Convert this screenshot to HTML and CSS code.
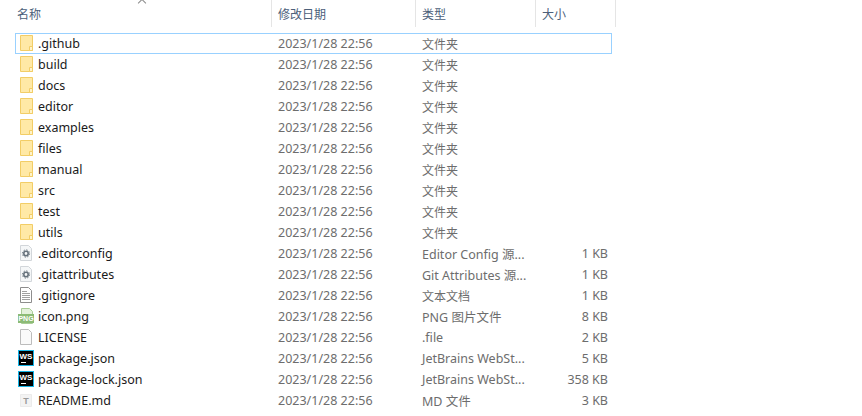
FILE: index.html
```html
<!DOCTYPE html>
<html lang="zh-CN">
  <head>
    <meta charset="UTF-8" />
    <title>three.js</title>
    <link rel="stylesheet" href="styles.css">
  </head>
  <body>
    <svg class="sprites" xmlns="http://www.w3.org/2000/svg">
      <symbol id="folder" viewBox="0 0 16 16">
        <path fill="#ffe9a6" stroke="#f2cd66" d="M2.5 .5H14.5V15.5H2.5Z"></path>
        <path fill="#fff3c9" stroke="#f2cd66" d="M11.5 15.5V11.5H14.5V15.5Z"></path>
      </symbol>
      <symbol id="config" viewBox="0 0 16 16">
        <path fill="#f5f7f8" stroke="#d2d6da" d="M2.5 .5H10.5L13.5 3.5V15.5H2.5Z"></path>
        <circle cx="8" cy="8.5" r="2.2" fill="none" stroke="#66727c" stroke-width="1.6"></circle>
        <circle cx="8" cy="8.5" r="3.6" fill="none" stroke="#66727c" stroke-width="1" stroke-dasharray="1.4 1.4"></circle>
      </symbol>
      <symbol id="text" viewBox="0 0 16 16">
        <path fill="#fff" stroke="#8d8d8d" d="M2.5 .5H10.5L13.5 3.5V15.5H2.5Z"></path>
        <path fill="none" stroke="#a0a0a0" d="M4 4.5H9M4 6.5H12M4 8.5H12M4 10.5H12M4 12.5H12"></path>
      </symbol>
      <symbol id="png" viewBox="0 0 16 16">
        <path fill="#e4f1dc" stroke="#a9cc96" d="M3.5 .5H11.5L14.5 3.5V15.5H3.5Z"></path>
        <rect x="0" y="6" width="16" height="9" fill="#8cbb76"></rect>
        <text x="8" y="13.4" class="png-mark" text-anchor="middle">PNG</text>
      </symbol>
      <symbol id="blank" viewBox="0 0 16 16">
        <path fill="#fafafa" stroke="#bcbcbc" d="M2.5 .5H10.5L13.5 3.5V15.5H2.5Z"></path>
      </symbol>
      <symbol id="webstorm" viewBox="0 0 16 16">
        <rect x=".5" y=".5" width="15" height="15" fill="#000" stroke="#14b4e6"></rect>
        <text x="8" y="9" class="ws-mark" text-anchor="middle">WS</text>
        <path stroke="#fff" d="M3 12.5H8"></path>
      </symbol>
      <symbol id="markdown" viewBox="0 0 16 16">
        <path fill="#f3f3f3" stroke="#ebebeb" d="M2.5 2.5H13.5V14.5H2.5Z"></path>
        <text x="8" y="12" class="md-mark" text-anchor="middle">T</text>
      </symbol>
    </svg>

    <div class="explorer">
      <div class="columns">
        <div class="col col-name">名称<span class="sort-arrow"></span></div>
        <div class="col">修改日期</div>
        <div class="col">类型</div>
        <div class="col">大小</div>
      </div>

      <div class="row selected">
        <span class="name"><svg class="icon"><use href="#folder"></use></svg>.github</span>
        <span>2023/1/28 22:56</span><span class="cjk">文件夹</span><span class="size"></span>
      </div>
      <div class="row">
        <span class="name"><svg class="icon"><use href="#folder"></use></svg>build</span>
        <span>2023/1/28 22:56</span><span class="cjk">文件夹</span><span class="size"></span>
      </div>
      <div class="row">
        <span class="name"><svg class="icon"><use href="#folder"></use></svg>docs</span>
        <span>2023/1/28 22:56</span><span class="cjk">文件夹</span><span class="size"></span>
      </div>
      <div class="row">
        <span class="name"><svg class="icon"><use href="#folder"></use></svg>editor</span>
        <span>2023/1/28 22:56</span><span class="cjk">文件夹</span><span class="size"></span>
      </div>
      <div class="row">
        <span class="name"><svg class="icon"><use href="#folder"></use></svg>examples</span>
        <span>2023/1/28 22:56</span><span class="cjk">文件夹</span><span class="size"></span>
      </div>
      <div class="row">
        <span class="name"><svg class="icon"><use href="#folder"></use></svg>files</span>
        <span>2023/1/28 22:56</span><span class="cjk">文件夹</span><span class="size"></span>
      </div>
      <div class="row">
        <span class="name"><svg class="icon"><use href="#folder"></use></svg>manual</span>
        <span>2023/1/28 22:56</span><span class="cjk">文件夹</span><span class="size"></span>
      </div>
      <div class="row">
        <span class="name"><svg class="icon"><use href="#folder"></use></svg>src</span>
        <span>2023/1/28 22:56</span><span class="cjk">文件夹</span><span class="size"></span>
      </div>
      <div class="row">
        <span class="name"><svg class="icon"><use href="#folder"></use></svg>test</span>
        <span>2023/1/28 22:56</span><span class="cjk">文件夹</span><span class="size"></span>
      </div>
      <div class="row">
        <span class="name"><svg class="icon"><use href="#folder"></use></svg>utils</span>
        <span>2023/1/28 22:56</span><span class="cjk">文件夹</span><span class="size"></span>
      </div>
      <div class="row">
        <span class="name"><svg class="icon"><use href="#config"></use></svg>.editorconfig</span>
        <span>2023/1/28 22:56</span><span>Editor Config 源...</span><span class="size">1 KB</span>
      </div>
      <div class="row">
        <span class="name"><svg class="icon"><use href="#config"></use></svg>.gitattributes</span>
        <span>2023/1/28 22:56</span><span>Git Attributes 源...</span><span class="size">1 KB</span>
      </div>
      <div class="row">
        <span class="name"><svg class="icon"><use href="#text"></use></svg>.gitignore</span>
        <span>2023/1/28 22:56</span><span class="cjk">文本文档</span><span class="size">1 KB</span>
      </div>
      <div class="row">
        <span class="name"><svg class="icon"><use href="#png"></use></svg>icon.png</span>
        <span>2023/1/28 22:56</span><span>PNG 图片文件</span><span class="size">8 KB</span>
      </div>
      <div class="row">
        <span class="name"><svg class="icon"><use href="#blank"></use></svg>LICENSE</span>
        <span>2023/1/28 22:56</span><span>.file</span><span class="size">2 KB</span>
      </div>
      <div class="row">
        <span class="name"><svg class="icon"><use href="#webstorm"></use></svg>package.json</span>
        <span>2023/1/28 22:56</span><span>JetBrains WebSt...</span><span class="size">5 KB</span>
      </div>
      <div class="row">
        <span class="name"><svg class="icon"><use href="#webstorm"></use></svg>package-lock.json</span>
        <span>2023/1/28 22:56</span><span>JetBrains WebSt...</span><span class="size">358 KB</span>
      </div>
      <div class="row">
        <span class="name"><svg class="icon"><use href="#markdown"></use></svg>README.md</span>
        <span>2023/1/28 22:56</span><span>MD 文件</span><span class="size">3 KB</span>
      </div>
    </div>
  </body>
</html>
```

FILE: styles.css
```css
body {
  margin: 0;
  background-color: #fff;
  font-family: "Noto Sans", "Noto Sans CJK SC", sans-serif;
  font-size: 12px;
  overflow: hidden;
}

.sprites {
  display: none;
}

.explorer {
  padding-left: 15px;
}

/* Column headers */
.columns {
  display: grid;
  grid-template-columns: 257px 144px 120px 80px;
  height: 27px;
  margin-bottom: 6px;
  color: #4c607a;
}

.col {
  position: relative;
  display: flex;
  align-items: center;
  box-sizing: border-box;
  padding-left: 6px;
  border-right: 1px solid #e5e5e5;
}

.col-name {
  padding-left: 2px;
}

.sort-arrow {
  position: absolute;
  top: 0;
  left: 124px;
  width: 5px;
  height: 5px;
  border-top: 1px solid #8a8a8a;
  border-left: 1px solid #8a8a8a;
  transform: rotate(45deg);
}

/* File rows */
.row {
  display: grid;
  grid-template-columns: 256px 144px 120px 77px;
  align-items: center;
  box-sizing: border-box;
  width: 597px;
  height: 21px;
  font-size: 12.5px;
  color: #6d6d6d;
}

.row > span {
  padding-left: 7px;
  white-space: nowrap;
}

.row .name {
  display: flex;
  align-items: center;
  gap: 4px;
  padding-left: 3px;
  color: #1a1a1a;
}

.row .cjk {
  font-size: 12px;
}

.row .size {
  padding-left: 0;
  padding-right: 4px;
  text-align: right;
}

.selected {
  box-shadow: inset 0 0 0 1px #99d1ff;
}

.icon {
  width: 16px;
  height: 16px;
  flex: none;
  margin-bottom: 1px;
}

.ws-mark {
  fill: #fff;
  font-family: "Liberation Sans", sans-serif;
  font-size: 8px;
  font-weight: 700;
}

.md-mark {
  fill: #9a9a9a;
  font-family: "Liberation Sans", sans-serif;
  font-size: 9px;
  font-weight: 700;
}

.png-mark {
  fill: #fff;
  font-family: "Liberation Sans", sans-serif;
  font-size: 7px;
  font-weight: 700;
}
```
